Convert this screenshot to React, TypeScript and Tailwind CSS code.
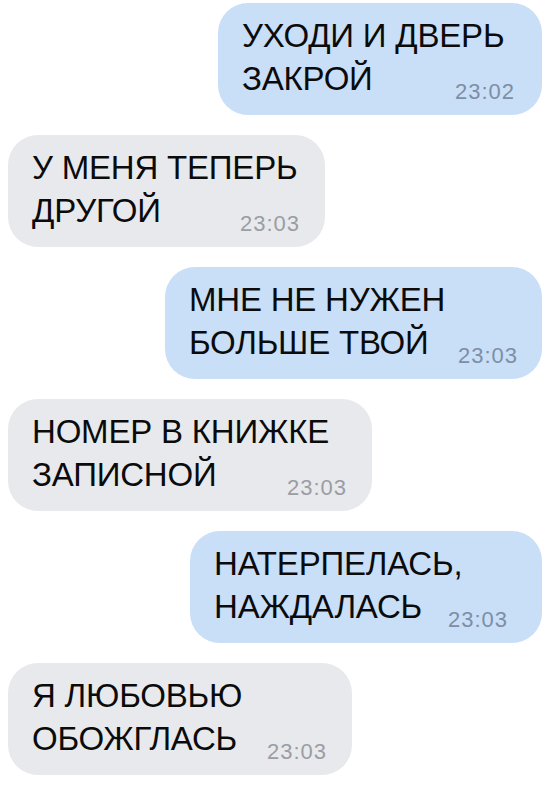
const messages = [
  { lines: ["УХОДИ И ДВЕРЬ", "ЗАКРОЙ"], time: "23:02", mine: true, width: "w-[324px]", timePad: "mr-[3px]" },
  { lines: ["У МЕНЯ ТЕПЕРЬ", "ДРУГОЙ"], time: "23:03", mine: false, width: "w-[317px]", timePad: "mr-[1px]" },
  { lines: ["МНЕ НЕ НУЖЕН", "БОЛЬШЕ ТВОЙ"], time: "23:03", mine: true, width: "w-[377px]", timePad: "mr-0" },
  { lines: ["НОМЕР В КНИЖКЕ", "ЗАПИСНОЙ"], time: "23:03", mine: false, width: "w-[364px]", timePad: "mr-[1px]" },
  { lines: ["НАТЕРПЕЛАСЬ,", "НАЖДАЛАСЬ"], time: "23:03", mine: true, width: "w-[352px]", timePad: "mr-[10px]" },
  { lines: ["Я ЛЮБОВЬЮ", "ОБОЖГЛАСЬ"], time: "23:03", mine: false, width: "w-[344px]", timePad: "mr-[1px]" },
]

function Bubble({ lines, time, mine, width, timePad }: (typeof messages)[number]) {
  return (
    <div
      className={`${width} rounded-[30px] pl-6 pr-6 pt-[11px] pb-[15px] ${
        mine ? "self-end bg-[#c9def7]" : "self-start bg-[#e8e9ec]"
      }`}
    >
      <div className="text-[33px] leading-[43px] text-[#0b0b0b] tracking-[-0.2px]">{lines[0]}</div>
      <div className="flex items-end">
        <span className="text-[33px] leading-[43px] text-[#0b0b0b] tracking-[-0.2px]">{lines[1]}</span>
        <span
          className={`ml-auto ${timePad} text-[22px] leading-[20px] tracking-[1px] -mb-[2px] ${
            mine ? "text-[#7e8ea4]" : "text-[#9a9da4]"
          }`}
        >
          {time}
        </span>
      </div>
    </div>
  )
}

export default function App() {
  return (
    <div
      className="w-[559px] h-[787px] bg-white flex flex-col gap-5 pt-[3px] pl-2 pr-[17px]"
      style={{ fontFamily: '"Liberation Sans", Arial, sans-serif' }}
    >
      {messages.map((m, i) => (
        <Bubble key={i} {...m} />
      ))}
    </div>
  )
}
